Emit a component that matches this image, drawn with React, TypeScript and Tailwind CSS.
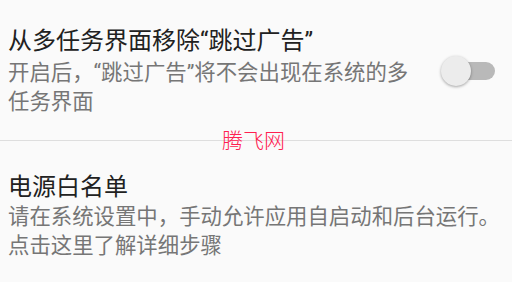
import React from "react";

const font = { fontFamily: 'Roboto, "Noto Sans CJK SC", sans-serif' };

function Switch() {
  return (
    <div className="relative w-[54px] h-[30px] shrink-0">
      <div className="absolute right-0 top-[6px] w-[42px] h-[18px] rounded-full bg-[#b9b9b9]" />
      <div className="absolute left-0 top-0 w-[30px] h-[30px] rounded-full bg-[#ececec] shadow-[0_1px_3px_rgba(0,0,0,0.35)]" />
    </div>
  );
}

export default function App() {
  return (
    <div
      className="relative w-[512px] h-[282px] bg-[#fafafa] overflow-hidden"
      style={font}
    >
      <div className="flex items-center pl-2 pr-[17px] pt-[26px] pb-[24px] border-b border-[#dedede]">
        <div className="w-[420px]">
          <div className="text-[24px] leading-[30px] text-[#212121]">
            从多任务界面移除“跳过广告”
          </div>
          <div className="mt-[2px] text-[21.4px] leading-[29px] text-[#767676]">
            开启后，“跳过广告”将不会出现在系统的多任务界面
          </div>
        </div>
        <div className="flex-1" />
        <Switch />
      </div>

      <div className="pl-2 pr-1 pt-[31px]">
        <div className="text-[24px] leading-[30px] text-[#212121]">电源白名单</div>
        <div className="text-[21.4px] leading-[29px] text-[#767676]">
          请在系统设置中，手动允许应用自启动和后台运行。点击这里了解详细步骤
        </div>
      </div>

      <div className="absolute left-[222px] top-[128px] text-[21px] leading-[26px] text-[#ff2050] font-light">
        腾飞网
      </div>
    </div>
  );
}
